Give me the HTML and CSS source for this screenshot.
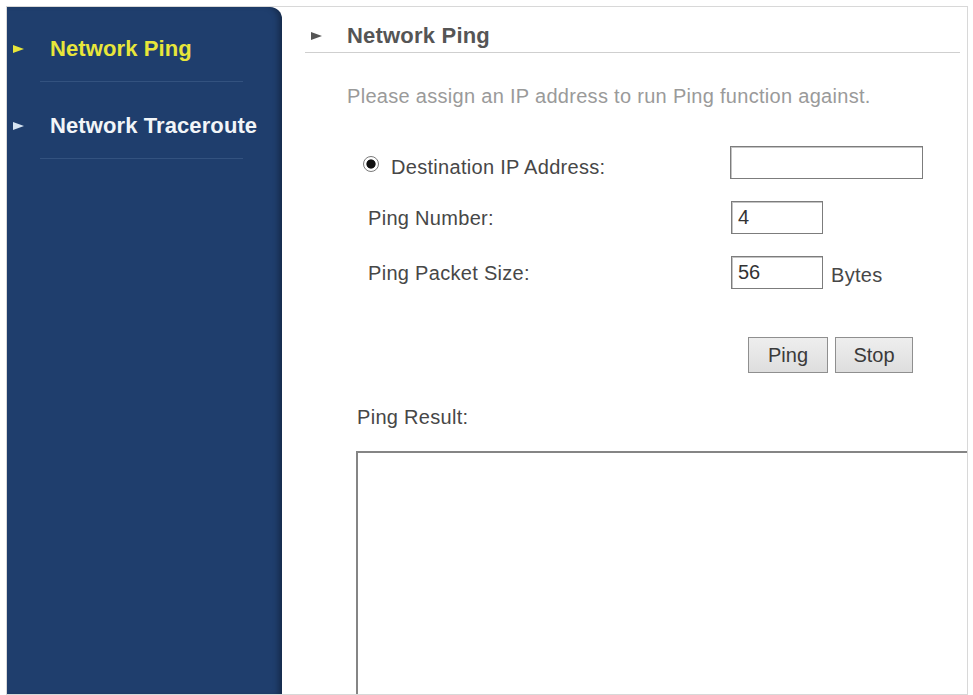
FILE: index.html
```html
<!DOCTYPE html>
<html lang="en">
<head>
<meta charset="utf-8">
<title>Network Ping</title>
<link rel="stylesheet" href="styles.css">
</head>
<body>
<div class="frame">
  <nav class="sidebar">
    <a class="nav-item active" href="#"><span class="tri"></span>Network Ping</a>
    <a class="nav-item" href="#"><span class="tri"></span>Network Traceroute</a>
  </nav>
  <main class="content">
    <h1 class="title"><span class="title-tri"></span>Network Ping</h1>
    <p class="desc">Please assign an IP address to run Ping function against.</p>
    <div class="form">
      <label class="lbl lbl-radio"><input type="radio" class="radio" name="target" checked>Destination IP Address:</label>
      <div class="field"><input type="text" class="txt txt-wide"></div>
      <label class="lbl">Ping Number:</label>
      <div class="field"><input type="text" class="txt txt-short" value="4"></div>
      <label class="lbl">Ping Packet Size:</label>
      <div class="field"><input type="text" class="txt txt-short" value="56"><span class="unit">Bytes</span></div>
    </div>
    <div class="actions">
      <button class="btn btn-ping">Ping</button>
      <button class="btn btn-stop">Stop</button>
    </div>
    <div class="result-label">Ping Result:</div>
    <textarea class="result" readonly></textarea>
  </main>
</div>
</body>
</html>
```
FILE: styles.css
```css
html, body {
  margin: 0;
  padding: 0;
  background: #ffffff;
}

body {
  font-family: "Liberation Sans", Arial, sans-serif;
  font-size: 20px;
  letter-spacing: 0.3px;
  color: #474747;
}

.frame {
  margin: 6px 0 0 6px;
  width: 960px;
  height: 687px;
  border: 1px solid #d8d8d8;
  display: flex;
  overflow: hidden;
}

/* left navigation */
.sidebar {
  width: 275px;
  flex: none;
  background: #1f3e6d;
  border-top-right-radius: 12px;
  box-shadow: inset -6px 0 6px -3px rgba(0, 0, 0, 0.35);
  display: flex;
  flex-direction: column;
}

.nav-item {
  position: relative;
  display: block;
  margin: 0 39px 0 33px;
  padding: 30px 0 20px 10px;
  line-height: 24px;
  font-size: 22px;
  font-weight: bold;
  letter-spacing: 0.1px;
  white-space: nowrap;
  color: #f2f5f8;
  text-decoration: none;
  border-bottom: 1px solid #33527f;
}

.nav-item + .nav-item {
  padding-top: 32px;
}

.nav-item.active {
  color: #e8e63a;
}

.nav-item .tri {
  position: absolute;
  left: -27px;
  top: 38px;
  width: 0;
  height: 0;
  border-top: 4.5px solid transparent;
  border-bottom: 4.5px solid transparent;
  border-left: 11px solid #d6e4f2;
}

.nav-item + .nav-item .tri {
  top: 40px;
}

.nav-item.active .tri {
  border-left-color: #e8e63a;
}

/* main panel */
.content {
  flex: 1;
  display: flex;
  flex-direction: column;
  min-width: 0;
}

.title {
  margin: 0 7px 0 23px;
  padding: 12px 0 0 6px;
  height: 33px;
  line-height: 33px;
  font-size: 22px;
  font-weight: bold;
  letter-spacing: 0.2px;
  color: #555555;
  border-bottom: 1px solid #cfcfcf;
  display: flex;
  align-items: center;
}

.title-tri {
  width: 0;
  height: 0;
  border-top: 4.5px solid transparent;
  border-bottom: 4.5px solid transparent;
  border-left: 11px solid #555555;
  margin-right: 25px;
}

.desc {
  margin: 31px 0 0 65px;
  line-height: 24px;
  color: #9a9a9a;
}

.form {
  margin: 38px 0 0 80px;
  display: grid;
  grid-template-columns: 368px auto;
  grid-auto-rows: 33px;
  row-gap: 22px;
  align-items: center;
}

.lbl {
  padding-left: 6px;
  line-height: 24px;
  display: flex;
  align-items: center;
}

.lbl-radio {
  padding-left: 0;
  margin-top: 8px;
}

.radio {
  appearance: none;
  -webkit-appearance: none;
  width: 16px;
  height: 16px;
  margin: -6px 12px 0 1px;
  border: 1.5px solid #7a7a7a;
  border-radius: 50%;
  background: radial-gradient(circle, #111 0 4.2px, #fff 5px);
  box-sizing: border-box;
}

.field {
  display: flex;
  align-items: center;
  height: 33px;
}

.txt {
  box-sizing: border-box;
  height: 33px;
  border: 1px solid #7c7c7c;
  box-shadow: inset 1px 1px 0 #c4c4c4;
  padding: 0 6px;
  font-family: "Liberation Sans", Arial, sans-serif;
  font-size: 20px;
  color: #333;
  background: #fff;
  outline: none;
}

.txt-wide {
  width: 193px;
}

.txt-short {
  width: 92px;
  margin-left: 1px;
}

.unit {
  margin-left: 8px;
  margin-top: 6px;
}

.actions {
  margin: 48px 0 0 466px;
  display: flex;
  gap: 7px;
}

.btn {
  box-sizing: border-box;
  height: 36px;
  border: 1px solid #8f8f8f;
  background: linear-gradient(#eeeeee, #dedede);
  font-family: "Liberation Sans", Arial, sans-serif;
  font-size: 20px;
  color: #3a3a3a;
  padding: 0;
}

.btn-ping {
  width: 80px;
}

.btn-stop {
  width: 78px;
}

.result-label {
  margin: 32px 0 0 75px;
  line-height: 24px;
}

.result {
  margin: 22px 0 0 74px;
  flex: 1;
  min-height: 260px;
  border: none;
  border-top: 2px solid #858585;
  border-left: 2px solid #858585;
  resize: none;
  outline: none;
  background: #fff;
}
```
